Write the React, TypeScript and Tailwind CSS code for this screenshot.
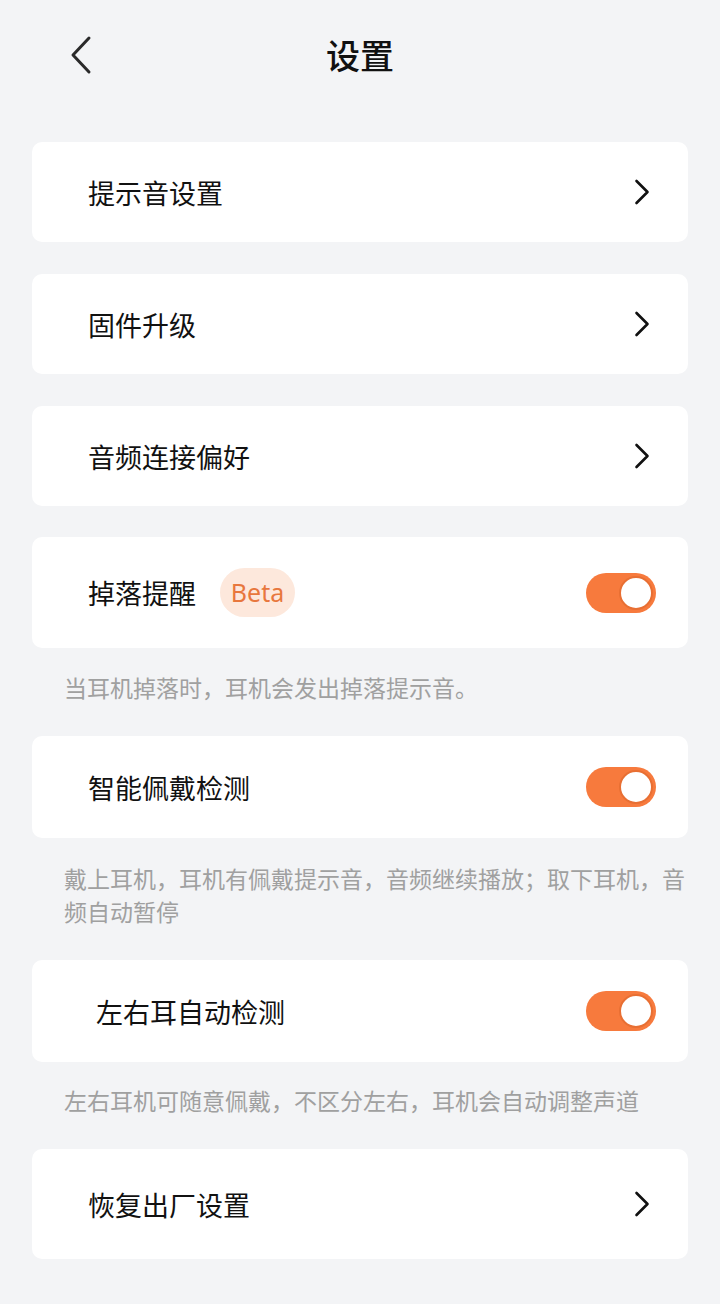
import React, { useState } from 'react';

const FONT = '"Noto Sans CJK SC", "Noto Sans", sans-serif';

function ChevronRight() {
  return (
    <svg width="16" height="26" viewBox="0 0 16 26" fill="none">
      <path d="M2.5 2 L13.5 13 L2.5 24" stroke="#111" strokeWidth="2.6" strokeLinecap="round" strokeLinejoin="round" />
    </svg>
  );
}

function Toggle({ on, onClick }: { on: boolean; onClick: () => void }) {
  return (
    <button
      onClick={onClick}
      className={`flex h-[40px] w-[70px] items-center rounded-full px-[3px] ${on ? 'justify-end bg-[#f77a3d]' : 'justify-start bg-[#d9d9d9]'}`}
    >
      <span className="block h-[34px] w-[34px] rounded-full border-[2px] border-[#e86f33] bg-white" />
    </button>
  );
}

function LinkCard({ label, height = 'h-[100px]' }: { label: string; height?: string }) {
  return (
    <div className={`flex ${height} items-center justify-between rounded-[10px] bg-white pl-[56px] pr-[38px]`}>
      <span className="text-[27px] leading-none text-[#111]">{label}</span>
      <ChevronRight />
    </div>
  );
}

export default function App() {
  const [drop, setDrop] = useState(true);
  const [wear, setWear] = useState(true);
  const [ear, setEar] = useState(true);

  return (
    <div className="min-h-[1304px] bg-[#f3f4f6] px-[32px]" style={{ fontFamily: FONT }}>
      {/* Header */}
      <div className="relative flex h-[110px] items-center justify-center">
        <button className="absolute left-[36px] top-[35px]">
          <svg width="26" height="40" viewBox="0 0 26 40" fill="none">
            <path d="M21 3 L5 20 L21 37" stroke="#2a2a2a" strokeWidth="3" strokeLinecap="round" strokeLinejoin="round" />
          </svg>
        </button>
        <h1 className="text-[34px] font-medium leading-none text-[#111]">设置</h1>
      </div>

      <div className="mt-[32px] flex flex-col gap-[32px]">
        <LinkCard label="提示音设置" />
        <LinkCard label="固件升级" />
        <LinkCard label="音频连接偏好" />
      </div>

      {/* 掉落提醒 */}
      <div className="mt-[31px] flex h-[111px] items-center justify-between rounded-[10px] bg-white pl-[56px] pr-[32px]">
        <div className="flex items-center gap-[24px]">
          <span className="text-[27px] leading-none text-[#111]">掉落提醒</span>
          <span
            className="flex h-[49px] w-[75px] items-center justify-center rounded-full bg-[#fde8dc] text-[25px] text-[#e8773d]"
            style={{ fontFamily: '"Noto Sans", sans-serif' }}
          >
            Beta
          </span>
        </div>
        <Toggle on={drop} onClick={() => setDrop(!drop)} />
      </div>
      <p className="mb-[32px] mt-[23px] pl-[32px] text-[23px] leading-[33px] text-[#a0a0a0]">
        当耳机掉落时，耳机会发出掉落提示音。
      </p>

      {/* 智能佩戴检测 */}
      <div className="flex h-[102px] items-center justify-between rounded-[10px] bg-white pl-[56px] pr-[32px]">
        <span className="text-[27px] leading-none text-[#111]">智能佩戴检测</span>
        <Toggle on={wear} onClick={() => setWear(!wear)} />
      </div>
      <p className="mb-[32px] mt-[24px] pl-[32px] text-[23px] leading-[33px] text-[#a0a0a0]">
        戴上耳机，耳机有佩戴提示音，音频继续播放；取下耳机，音频自动暂停
      </p>

      {/* 左右耳自动检测 */}
      <div className="flex h-[102px] items-center justify-between rounded-[10px] bg-white pl-[64px] pr-[32px]">
        <span className="text-[27px] leading-none text-[#111]">左右耳自动检测</span>
        <Toggle on={ear} onClick={() => setEar(!ear)} />
      </div>
      <p className="mb-[32px] mt-[22px] pl-[32px] text-[23px] leading-[33px] text-[#a0a0a0]">
        左右耳机可随意佩戴，不区分左右，耳机会自动调整声道
      </p>

      <LinkCard label="恢复出厂设置" height="h-[110px]" />
    </div>
  );
}
